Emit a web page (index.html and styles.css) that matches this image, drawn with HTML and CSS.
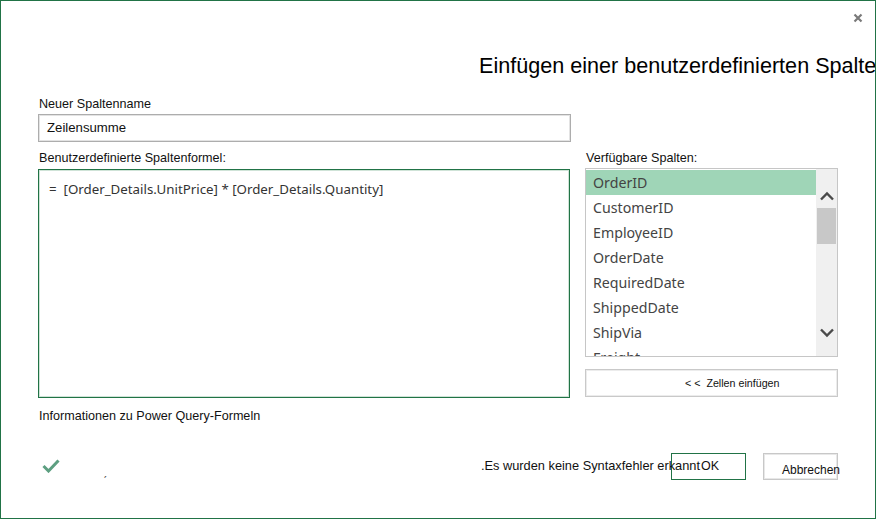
FILE: index.html
```html
<!DOCTYPE html>
<html lang="de">
<head>
<meta charset="utf-8">
<title>Einfügen einer benutzerdefinierten Spalte</title>
<link rel="stylesheet" href="styles.css">
</head>
<body>
<div class="dialog">
  <div class="topbar">
    <svg class="close" width="10" height="10" viewBox="0 0 10 10"><path d="M1.5 1.5 L8.5 8.5 M8.5 1.5 L1.5 8.5" stroke="#7a7a7a" stroke-width="2.2" fill="none"/></svg>
  </div>
  <h1 class="title">Einfügen einer benutzerdefinierten Spalte</h1>
  <div class="name-field">
    <div class="label">Neuer Spaltenname</div>
    <div class="textbox">Zeilensumme</div>
  </div>
  <div class="columns">
    <div class="left">
      <div class="label">Benutzerdefinierte Spaltenformel:</div>
      <div class="formula">=&nbsp;&nbsp;[Order_Details.UnitPrice] * [Order_Details.Quantity]</div>
    </div>
    <div class="right">
      <div class="label">Verfügbare Spalten:</div>
      <div class="listbox">
        <ul class="items">
          <li class="selected">OrderID</li>
          <li>CustomerID</li>
          <li>EmployeeID</li>
          <li>OrderDate</li>
          <li>RequiredDate</li>
          <li>ShippedDate</li>
          <li>ShipVia</li>
          <li>Freight</li>
        </ul>
        <div class="scrollbar">
          <svg class="arrow" width="16" height="10" viewBox="0 0 16 10"><path d="M2 8.5 L8 2.5 L14 8.5" stroke="#4a4a4a" stroke-width="2.4" fill="none"/></svg>
          <div class="thumb"></div>
          <div class="track-space"></div>
          <svg class="arrow" width="16" height="10" viewBox="0 0 16 10"><path d="M2 1.5 L8 7.5 L14 1.5" stroke="#4a4a4a" stroke-width="2.4" fill="none"/></svg>
        </div>
      </div>
      <div class="insert-btn">&lt; &lt;&nbsp; Zellen einfügen</div>
    </div>
  </div>
  <div class="info">Informationen zu Power Query-Formeln</div>
  <div class="footer">
    <svg class="check" width="18" height="14" viewBox="0 0 18 14"><path d="M1.5 7 L6.5 12 L16.5 1.5" stroke="#5d9f81" stroke-width="3" fill="none"/></svg>
    <span class="tick">ˏ</span>
    <span class="status">.Es wurden keine Syntaxfehler erkannt</span>
    <div class="btn ok">OK</div>
    <div class="btn cancel">Abbrechen</div>
  </div>
</div>
</body>
</html>
```
FILE: styles.css
```css
html, body {
  margin: 0;
  padding: 0;
  background: #ffffff;
}
.dialog {
  box-sizing: border-box;
  width: 876px;
  height: 519px;
  border: 1px solid #217346;
  background: #fff;
  overflow: hidden;
  font-family: "Liberation Sans", Arial, sans-serif;
  color: #1a1a1a;
  padding: 0 0 0 37px;
}
.topbar {
  height: 34px;
  display: flex;
  justify-content: flex-end;
  align-items: center;
  padding-right: 12px;
}
.close { display: block; margin-top: -1px; }
.title {
  margin: 17px 0 0 441px;
  font-weight: normal;
  font-size: 21.6px;
  line-height: 28px;
  white-space: nowrap;
  color: #000;
}
.label {
  font-size: 12.6px;
  line-height: 16px;
  color: #111;
  padding-left: 1px;
}
.name-field {
  margin-top: 16px;
  width: 533px;
}
.textbox {
  margin-top: 2px;
  box-sizing: border-box;
  height: 28px;
  border: 1px solid #adadad;
  box-shadow: inset 0 0 0 1px #e3e3e3;
  font-size: 13.2px;
  line-height: 26px;
  padding-left: 8px;
  color: #111;
}
.columns {
  display: flex;
  gap: 15px;
  margin-top: 8px;
}
.left { width: 532px; }
.right { width: 253px; }
.formula {
  margin-top: 3px;
  box-sizing: border-box;
  height: 229px;
  border: 1px solid #217346;
  box-shadow: inset 0 0 0 1px #cfe3d7;
  font-family: "Noto Sans", "Open Sans", sans-serif;
  font-size: 13.3px;
  line-height: 18px;
  color: #333;
  padding: 10px 0 0 10px;
  white-space: nowrap;
}
.listbox {
  margin-top: 2px;
  box-sizing: border-box;
  height: 189px;
  border: 1px solid #c6c6c6;
  display: flex;
  overflow: hidden;
}
.items {
  list-style: none;
  margin: 0;
  padding: 1px 0 0 0;
  flex: 1;
  font-family: "Noto Sans", "Open Sans", sans-serif;
  font-size: 14.2px;
  color: #444;
}
.items li {
  height: 25px;
  line-height: 25px;
  padding-left: 7px;
}
.items li.selected {
  background: #9fd5b7;
}
.scrollbar {
  width: 21px;
  background: #f0f0f0;
  display: flex;
  flex-direction: column;
  align-items: center;
  padding-top: 22px;
  padding-bottom: 18px;
}
.arrow { display: block; flex: none; }
.thumb {
  width: 19px;
  height: 36px;
  background: #c8c8c8;
  margin-top: 7px;
  flex: none;
}
.track-space { flex: 1; }
.insert-btn {
  margin-top: 12px;
  box-sizing: border-box;
  height: 28px;
  border: 1px solid #c9c9c9;
  box-shadow: inset 0 0 0 1px #ececec;
  font-size: 10.7px;
  line-height: 26px;
  padding-left: 99px;
  color: #111;
  white-space: nowrap;
}
.info {
  margin-top: 10px;
  font-size: 12.6px;
  line-height: 16px;
  padding-left: 1px;
  color: #111;
}
.footer {
  margin-top: 29px;
  display: flex;
  align-items: center;
  height: 27px;
  width: 800px;
}
.check { display: block; margin-left: 4px; margin-top: -2px; }
.tick {
  font-size: 12px;
  color: #555;
  margin-left: 43px;
  margin-top: 9px;
}
.status {
  margin-left: auto;
  margin-right: -29px;
  font-size: 12.8px;
  white-space: nowrap;
  color: #111;
  position: relative;
  z-index: 0;
  margin-top: -3px;
}
.btn {
  box-sizing: border-box;
  height: 27px;
  width: 75px;
  font-size: 12.5px;
  white-space: nowrap;
}
.ok {
  border: 1px solid #217346;
  padding-left: 29px;
  line-height: 25px;
  color: #111;
}
.cancel {
  margin-left: 17px;
  border: 1px solid #c8c8c8;
  box-shadow: inset 0 0 0 1px #e8e8e8;
  padding-left: 18px;
  line-height: 32px;
  font-size: 12px;
  color: #111;
}
```
